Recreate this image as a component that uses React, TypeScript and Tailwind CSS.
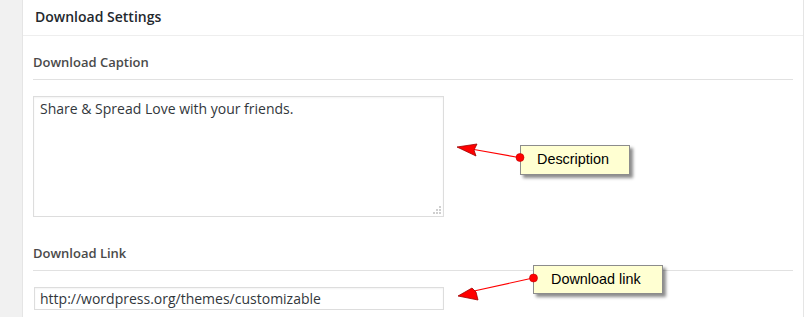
import React from "react";

const font = { fontFamily: '"Open Sans", "Noto Sans", sans-serif' };

function Callout({ left, top, width, height, text, padLeft }: { left: number; top: number; width: number; height: number; text: string; padLeft: number }) {
  return (
    <div
      className="absolute flex items-center bg-[#ffffd2] border border-[#8c8c8c] shadow-[3px_3px_3px_rgba(0,0,0,0.45)] text-[14.4px] text-black"
      style={{ left, top, width, height, paddingLeft: padLeft, fontFamily: '"Liberation Sans", Arial, sans-serif' }}
    >
      {text}
    </div>
  );
}

export default function App() {
  return (
    <div className="relative flex w-[804px] h-[317px] overflow-hidden bg-[#f1f1f1]" style={font}>
      <div className="w-[22px] shrink-0" />
      <div className="flex-1 bg-white border-l border-r border-[#e5e5e5] flex flex-col">
        <div className="h-[36px] shrink-0 border-b border-[#eeeeee] pl-[12px] flex items-center text-[14px] font-semibold text-[#23282d] leading-[20px] pb-[1px]">
          Download Settings
        </div>
        <div className="px-[10px] flex flex-col">
          <div className="pt-[16px] pb-[7px] border-b border-[#e1e1e1] text-[13px] font-semibold text-[#4a4a4a] leading-[20px]">
            Download Caption
          </div>
          <div className="mt-[16px] w-[411px] h-[121px] border border-[#dddddd] relative shadow-[inset_0_1px_2px_rgba(0,0,0,0.05)] px-[6px] pt-[2px] text-[14px] leading-[20px] text-[#32373c]">
            Share &amp; Spread Love with your friends.
            <svg className="absolute right-[1px] bottom-[1px]" width="10" height="10" viewBox="0 0 10 10">
              <rect x="7" y="1" width="2" height="2" fill="#cfcfcf" />
              <rect x="4" y="4" width="2" height="2" fill="#cfcfcf" />
              <rect x="7" y="4" width="2" height="2" fill="#cfcfcf" />
              <rect x="1" y="7" width="2" height="2" fill="#cfcfcf" />
              <rect x="4" y="7" width="2" height="2" fill="#cfcfcf" />
              <rect x="7" y="7" width="2" height="2" fill="#cfcfcf" />
            </svg>
          </div>
          <div className="mt-[26px] pb-[7px] border-b border-[#e1e1e1] text-[13px] font-semibold text-[#4a4a4a] leading-[20px]">
            Download Link
          </div>
          <div className="mt-[16px] ml-[1px] w-[410px] h-[23px] border border-[#dddddd] shadow-[inset_0_1px_2px_rgba(0,0,0,0.05)] px-[5px] flex items-center text-[14px] text-[#32373c]">
            http://wordpress.org/themes/customizable
          </div>
        </div>
      </div>

      <svg className="absolute left-0 top-0" width="804" height="317" viewBox="0 0 804 317">
        <line x1="519" y1="157.5" x2="474" y2="149.5" stroke="#ff0000" strokeWidth="1.2" />
        <polygon points="457,147 477,144 474,150 476,156" fill="#ff0000" stroke="#a00000" strokeWidth="0.8" />
        <line x1="533" y1="278" x2="474" y2="291" stroke="#ff0000" strokeWidth="1.2" />
        <polygon points="458,296 472,288 476,292 478,300" fill="#ff0000" stroke="#a00000" strokeWidth="0.8" />
      </svg>

      <Callout left={520} top={145} width={110} height={30} text="Description" padLeft={16} />
      <Callout left={533} top={265} width={130} height={29} text="Download link" padLeft={17} />

      <svg className="absolute left-0 top-0 pointer-events-none" width="804" height="317" viewBox="0 0 804 317">
        <circle cx="520" cy="157.5" r="4" fill="#ff0000" stroke="#c00000" strokeWidth="0.6" />
        <circle cx="533.5" cy="278" r="4" fill="#ff0000" stroke="#c00000" strokeWidth="0.6" />
      </svg>
    </div>
  );
}
